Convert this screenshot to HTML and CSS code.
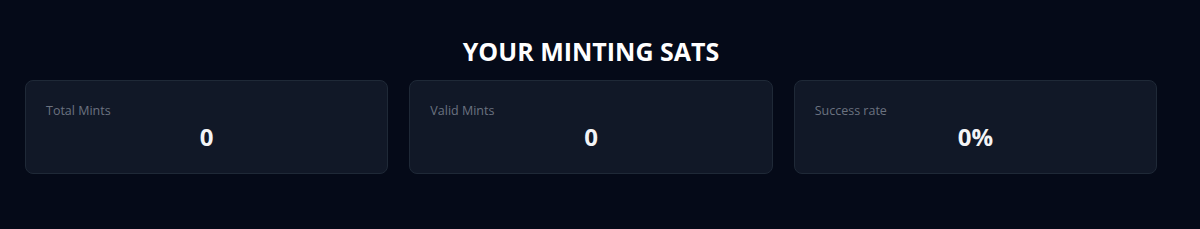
FILE: index.html
```html
<!DOCTYPE html>
<html lang="en">
<head>
<meta charset="utf-8">
<title>Your Minting Sats</title>
<link rel="stylesheet" href="styles.css">
</head>
<body>
  <main class="page">
    <h2 class="title">YOUR MINTING SATS</h2>
    <section class="stats">
      <div class="card">
        <div class="label">Total Mints</div>
        <div class="value">0</div>
      </div>
      <div class="card">
        <div class="label">Valid Mints</div>
        <div class="value">0</div>
      </div>
      <div class="card">
        <div class="label">Success rate</div>
        <div class="value">0%</div>
      </div>
    </section>
  </main>
</body>
</html>
```
FILE: styles.css
```css
html, body {
  margin: 0;
  padding: 0;
  background: #050a18;
  height: 100%;
}
body {
  font-family: "Open Sans", "Noto Sans", "Liberation Sans", sans-serif;
  color: #f3f4f6;
}
.page {
  padding: 35px 43px 0 25px;
}
.title {
  margin: 0 0 13px;
  text-align: center;
  font-size: 25px;
  line-height: 32px;
  font-weight: 700;
  color: #ffffff;
  letter-spacing: 0;
}
.stats {
  display: grid;
  grid-template-columns: repeat(3, 1fr);
  gap: 21px;
}
.card {
  background: #111827;
  border: 1px solid #1f2937;
  border-radius: 8px;
  padding: 20px 20px 20px;
}
.label {
  font-size: 12.5px;
  line-height: 20px;
  color: #6b7280;
}
.value {
  text-align: center;
  font-size: 24px;
  line-height: 32px;
  font-weight: 700;
  color: #f3f4f6;
}
```
